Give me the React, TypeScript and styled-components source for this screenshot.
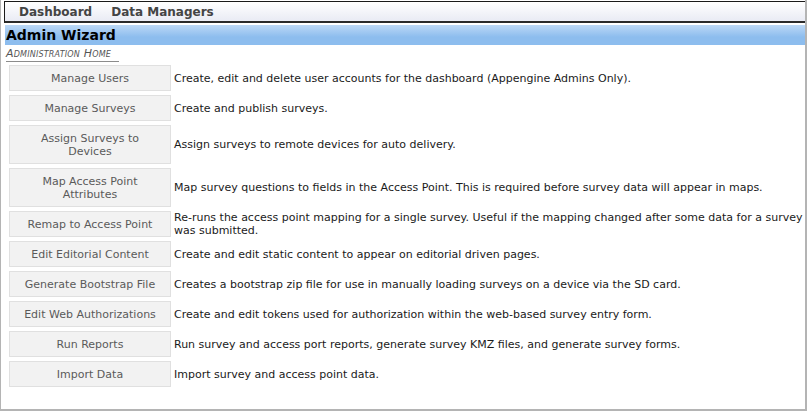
import styled, { createGlobalStyle } from "styled-components";

const GlobalStyle = createGlobalStyle`
  html, body {
    margin: 0;
    padding: 0;
    background: #ffffff;
  }
  body {
    font-family: "DejaVu Sans", "Liberation Sans", sans-serif;
    font-size: 11px;
  }
`;

interface Tool {
  label: string[];
  description: string;
}

const tools: Tool[] = [
  {
    label: ["Manage Users"],
    description:
      "Create, edit and delete user accounts for the dashboard (Appengine Admins Only).",
  },
  { label: ["Manage Surveys"], description: "Create and publish surveys." },
  {
    label: ["Assign Surveys to", "Devices"],
    description: "Assign surveys to remote devices for auto delivery.",
  },
  {
    label: ["Map Access Point", "Attributes"],
    description:
      "Map survey questions to fields in the Access Point. This is required before survey data will appear in maps.",
  },
  {
    label: ["Remap to Access Point"],
    description:
      "Re-runs the access point mapping for a single survey. Useful if the mapping changed after some data for a survey was submitted.",
  },
  {
    label: ["Edit Editorial Content"],
    description: "Create and edit static content to appear on editorial driven pages.",
  },
  {
    label: ["Generate Bootstrap File"],
    description:
      "Creates a bootstrap zip file for use in manually loading surveys on a device via the SD card.",
  },
  {
    label: ["Edit Web Authorizations"],
    description:
      "Create and edit tokens used for authorization within the web-based survey entry form.",
  },
  {
    label: ["Run Reports"],
    description:
      "Run survey and access port reports, generate survey KMZ files, and generate survey forms.",
  },
  { label: ["Import Data"], description: "Import survey and access point data." },
];

export default function App(): JSX.Element {
  return (
    <StyledFrame>
      <GlobalStyle />
      <StyledNav>
        <StyledNavItem>Dashboard</StyledNavItem>
        <StyledNavItem>Data Managers</StyledNavItem>
      </StyledNav>
      <StyledTitle>Admin Wizard</StyledTitle>
      <StyledCrumb>
        <StyledCrumbText>Administration Home</StyledCrumbText>
      </StyledCrumb>
      <StyledList>
        {tools.map((tool) => (
          <StyledRow key={tool.label.join(" ")}>
            <StyledButton $tall={tool.label.length > 1}>
              {tool.label.map((line) => (
                <span key={line}>{line}</span>
              ))}
            </StyledButton>
            <StyledDescription>{tool.description}</StyledDescription>
          </StyledRow>
        ))}
      </StyledList>
    </StyledFrame>
  );
}

const StyledFrame = styled.div`
  box-sizing: border-box;
  width: 807px;
  height: 411px;
  border: 1px solid #b4b4b4;
  border-right-width: 2px;
  border-bottom-width: 2px;
  border-top: none;
  padding: 1px 0 0 3px;
  overflow: hidden;
`;

const StyledNav = styled.nav`
  display: flex;
  gap: 19px;
  height: 19px;
  padding-left: 14px;
  align-items: center;
  border-top: 1px solid #1a1a1a;
  border-bottom: 2px solid #2a2a2a;
  border-left: 1px solid #1a1a1a;
  background: linear-gradient(#ffffff, #e9ebf4);
`;

const StyledNavItem = styled.span`
  font-weight: bold;
  font-size: 12px;
  color: #444444;
`;

const StyledTitle = styled.h1`
  margin: 2px 0 0 1px;
  height: 20px;
  padding-left: 1px;
  line-height: 20px;
  font-size: 14px;
  font-weight: bold;
  color: #000000;
  background: linear-gradient(#bcd8f6, #8dbdee 60%, #8dbdee);
`;

const StyledCrumb = styled.div`
  margin-left: 2px;
  padding-top: 2px;
`;

const StyledCrumbText = styled.span`
  display: inline-block;
  font-style: italic;
  font-variant: small-caps;
  font-size: 11px;
  color: #555555;
  letter-spacing: 0.2px;
  padding-bottom: 1px;
  border-bottom: 1px solid #8c8c8c;
  width: 113px;
`;

const StyledList = styled.div`
  display: flex;
  flex-direction: column;
  gap: 4px;
  padding: 3px 0 0 5px;
`;

const StyledRow = styled.div`
  display: flex;
  align-items: center;
  gap: 3px;
`;

const StyledButton = styled.div<{ $tall: boolean }>`
  flex: 0 0 auto;
  box-sizing: border-box;
  width: 162px;
  min-height: ${(p) => (p.$tall ? "39px" : "26px")};
  display: flex;
  flex-direction: column;
  align-items: center;
  justify-content: center;
  background: #f2f2f2;
  border: 1px solid #e0e0e0;
  color: #5a5a5a;
  font-size: 11px;
  line-height: 13px;
`;

const StyledDescription = styled.div`
  color: #1a1a1a;
  font-size: 11px;
  line-height: 13px;
  padding-right: 2px;
`;
